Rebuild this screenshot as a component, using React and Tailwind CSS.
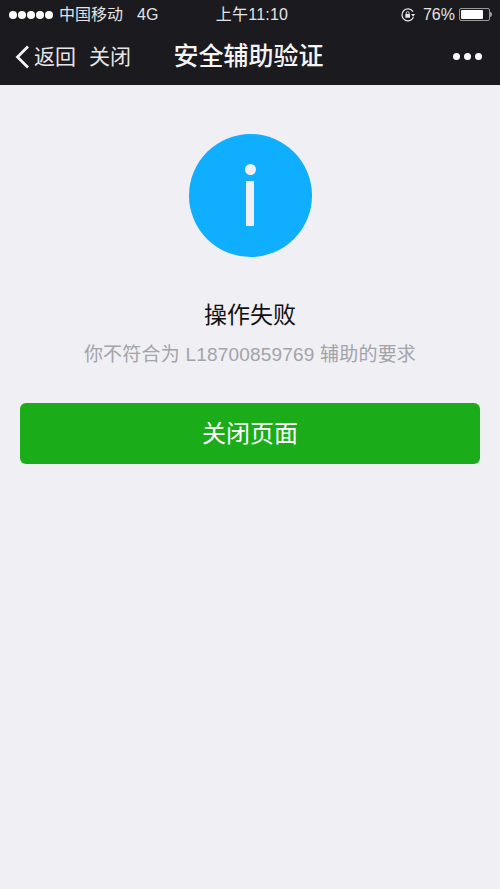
import React from 'react';

const font = { fontFamily: '"Liberation Sans", "Noto Sans CJK SC", sans-serif' };

const StatusBar = () => (
  <div className="flex h-[29px] items-center justify-between pl-[9px] pr-[8px] text-[16px] text-[#e4e4e6]">
    <div className="flex w-[183px] items-center">
      <div className="flex gap-[1px]">
        {[0, 1, 2, 3, 4].map((i) => (
          <span key={i} className="h-2 w-2 rounded-full bg-white" />
        ))}
      </div>
      <span className="ml-[6px] leading-none">中国移动</span>
      <span className="ml-[14px] leading-none">4G</span>
    </div>
    <span className="leading-none tracking-[0.2px]">上午11:10</span>
    <div className="flex w-[180px] items-center justify-end">
      <svg width="16" height="16" viewBox="0 0 15 15" fill="none" className="mr-[7px]">
        <path d="M12.6 9.6A5.6 5.6 0 1 1 12.2 4.4" stroke="#e4e4e6" strokeWidth="1.2" />
        <path d="M10.4 6.6h3.8l-1.9 2.6z" fill="#e4e4e6" />
        <rect x="5" y="6.6" width="4.4" height="3.4" rx="0.5" fill="#e4e4e6" />
        <path d="M5.9 6.6V5.6a1.3 1.3 0 0 1 2.6 0v1" stroke="#e4e4e6" strokeWidth="0.8" />
      </svg>
      <span className="leading-none">76%</span>
      <div className="ml-[4px] flex items-center">
        <div className="flex h-[13px] w-[31px] rounded-[2px] border border-[#9a9a9c] p-[1px]">
          <div className="h-full w-[22px] rounded-[1px] bg-white" />
        </div>
        <div className="h-[5px] w-[2px] rounded-r-sm bg-[#9a9a9c]" />
      </div>
    </div>
  </div>
);

const NavBar = () => (
  <div className="flex h-[56px] items-center justify-between pb-[1px] pl-[15px] pr-[18px]">
    <div className="flex w-[150px] items-center text-[21px] leading-none text-[#e6e6e8]">
      <svg width="15" height="24" viewBox="0 0 15 24" fill="none">
        <path d="M13 1.5 2.5 12 13 22.5" stroke="#f2f2f2" strokeWidth="2.8" />
      </svg>
      <span className="ml-[4px]">返回</span>
      <span className="ml-[13px]">关闭</span>
    </div>
    <span className="text-[25px] leading-none font-medium text-[#f4f4f4]">安全辅助验证</span>
    <div className="flex w-[150px] justify-end gap-[4px]">
      {[0, 1, 2].map((i) => (
        <span key={i} className="h-[7px] w-[7px] rounded-full bg-white" />
      ))}
    </div>
  </div>
);

export default function App() {
  return (
    <div className="flex min-h-[889px] flex-col bg-[#efeff4]" style={font}>
      <div className="bg-[#1a1a1f]">
        <StatusBar />
        <NavBar />
      </div>
      <div className="flex flex-col items-center px-5 pt-[49px]">
        <div className="flex h-[123px] w-[123px] flex-col items-center rounded-full bg-[#10aeff] pt-[30px]">
          <span className="h-[11px] w-[11px] rounded-full bg-[#efeff4]" />
          <span className="mt-[6px] h-[45px] w-2 bg-[#efeff4]" />
        </div>
        <h1 className="mt-[43px] text-[23px] leading-[30px] font-normal text-[#111]">操作失败</h1>
        <p className="mt-[12px] text-[19px] leading-[26px] tracking-[0.2px] text-[#a3a3a8]">你不符合为 L18700859769 辅助的要求</p>
        <button className="mt-[35px] h-[61px] w-full rounded-[6px] bg-[#1aad19] text-[24px] text-white">关闭页面</button>
      </div>
    </div>
  );
}
